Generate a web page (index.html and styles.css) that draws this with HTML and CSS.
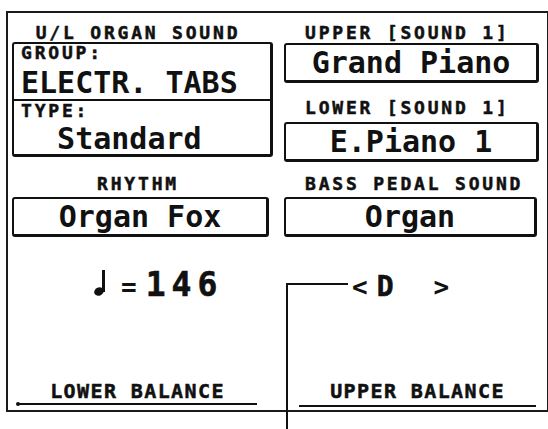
FILE: index.html
```html
<!DOCTYPE html>
<html>
<head>
<meta charset="utf-8">
<link rel="stylesheet" href="styles.css">
</head>
<body>
<div class="frame">
  <div class="screen">
    <div class="label label-left">U/L ORGAN SOUND</div>
    <div class="label label-right">UPPER [SOUND 1]</div>

    <div class="groupbox">
      <div class="section section-top">
        <div class="label sublabel">GROUP:</div>
        <div class="value value-left">ELECTR. TABS</div>
      </div>
      <div class="section section-bottom">
        <div class="label sublabel">TYPE:</div>
        <div class="value value-left">  Standard</div>
      </div>
    </div>
    <div class="rightstack">
      <div class="box box-upper"><div class="value">Grand Piano</div></div>
      <div class="label label-right label-lower">LOWER [SOUND 1]</div>
      <div class="box box-lower"><div class="value">E.Piano 1</div></div>
    </div>

    <div class="label label-left label-mid">RHYTHM</div>
    <div class="label label-right label-mid">BASS PEDAL SOUND</div>

    <div class="box box-rhythm"><div class="value">Organ Fox</div></div>
    <div class="box box-bass"><div class="value">Organ</div></div>

    <div class="tempo">
      <svg class="note" width="11" height="26" viewBox="0 0 11 26">
        <rect x="8" y="0" width="3" height="22" fill="#111"/>
        <ellipse cx="5" cy="21.5" rx="5" ry="4" transform="rotate(-25 5 21.5)" fill="#111"/>
      </svg><span class="equals">=</span><span class="bpm">146</span>
    </div>
    <div class="chord">
      <span class="arrow">&lt;</span><span class="key">D</span><span class="arrow arrow-r">&gt;</span>
    </div>

    <div class="balance balance-lower">
      <div class="label balance-label">LOWER BALANCE</div>
      <div class="underline underline-lower"></div>
    </div>
    <div class="balance balance-upper">
      <div class="label balance-label">UPPER BALANCE</div>
      <div class="underline underline-upper"></div>
    </div>
  </div>
</div>
<div class="callout-h"></div>
<div class="callout-v"></div>
</body>
</html>
```

FILE: styles.css
```css
html, body {
  margin: 0;
  padding: 0;
  background: #ffffff;
}

body {
  width: 548px;
  height: 429px;
  overflow: hidden;
  position: relative;
  color: #111;
  font-family: "DejaVu Sans Mono", "Liberation Mono", monospace;
  font-weight: bold;
}

.frame {
  margin: 11px 0 0 6px;
  width: 533px;
  border: 2px solid #1a1a1a;
  padding: 12px 2px 3px 4px;
}

.screen {
  display: grid;
  grid-template-columns: 261px 255px;
  column-gap: 11px;
  align-items: start;
}

.label {
  font-size: 18px;
  line-height: 16px;
  height: 16px;
  letter-spacing: 2.8px;
  white-space: pre;
  -webkit-text-stroke: 0.5px #111;
}

.label-left {
  text-align: center;
  padding-right: 9px;
}

.label-right {
  padding-left: 21px;
}

.label-lower {
  margin-top: 17px;
}

.label-mid {
  margin-top: 14px;
}

.value {
  font-size: 30px;
  line-height: 35px;
  height: 35px;
  text-align: center;
  white-space: pre;
}

.value-left {
  text-align: left;
  line-height: 30px;
  height: 30px;
}

.box, .groupbox {
  border: 2px solid #111;
  border-right-width: 3px;
  border-bottom-width: 3px;
  border-radius: 3px;
}

.groupbox {
  margin-top: 1px;
}

.section {
  padding-left: 7px;
}

.section-top {
  padding-top: 1px;
  border-bottom: 2px solid #111;
}

.section-top .value-left {
  margin-top: 7px;
  margin-bottom: 1px;
}

.section-bottom {
  padding-top: 2px;
}

.section-bottom .value-left {
  margin-top: 5px;
}

.rightstack {
  margin-top: 2px;
}

.box-lower {
  margin-top: 6px;
}

.box-rhythm {
  margin-top: 5px;
  width: 252px;
}

.box-bass {
  margin-top: 5px;
  width: 248px;
}

.tempo, .chord {
  margin-top: 31px;
  height: 33px;
  font-size: 33px;
  line-height: 33px;
  white-space: nowrap;
}

.tempo {
  padding-left: 82px;
}

.note {
  vertical-align: baseline;
}

.equals {
  font-size: 26px;
  margin-left: 16px;
}

.bpm {
  margin-left: 9px;
  letter-spacing: 6px;
  -webkit-text-stroke: 0.6px #111;
}

.chord {
  padding-left: 68px;
}

.arrow {
  font-size: 26px;
}

.key {
  font-size: 28px;
  margin-left: 9px;
  -webkit-text-stroke: 0.6px #111;
}

.arrow-r {
  margin-left: 40px;
}

.balance {
  margin-top: 81px;
}

.balance-label {
  font-size: 20px;
  line-height: 18px;
  height: 18px;
  text-align: center;
  letter-spacing: 1.4px;
}

.balance-lower {
  margin-left: 6px;
  width: 239px;
}

.balance-upper {
  margin-left: 15px;
  width: 237px;
}

.underline {
  height: 2px;
  background: #111;
}

.underline-lower {
  margin-top: 3px;
  position: relative;
}

.underline-lower::before {
  content: "";
  position: absolute;
  left: -2px;
  top: -1px;
  width: 4px;
  height: 4px;
  border-radius: 50%;
  background: #111;
}

.underline-upper {
  margin-top: 5px;
}

.callout-h {
  position: absolute;
  left: 286px;
  top: 283px;
  width: 62px;
  height: 2px;
  background: #111;
}

.callout-v {
  position: absolute;
  left: 286px;
  top: 283px;
  width: 2px;
  height: 146px;
  background: #111;
}
```
